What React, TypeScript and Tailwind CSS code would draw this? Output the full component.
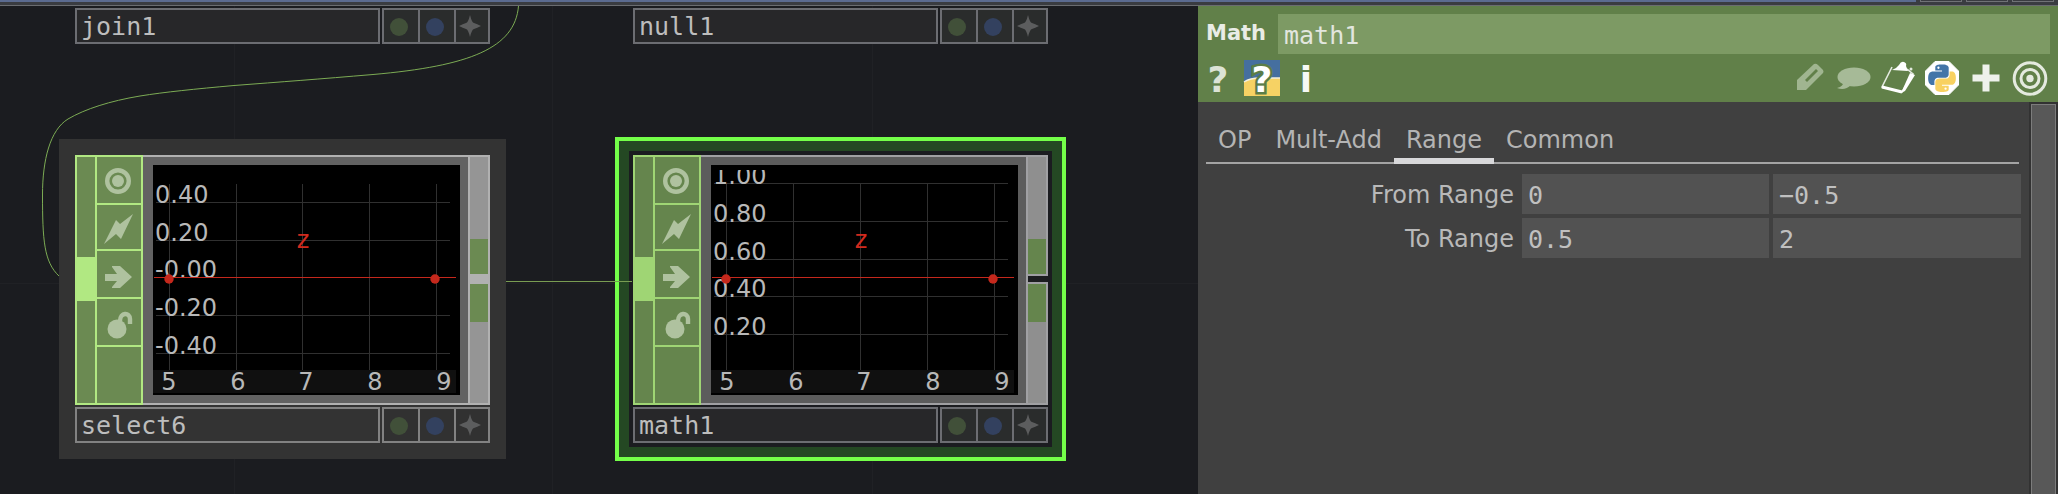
import React from "react";

type Tone = "plain" | "selected";

const PYTHON_BLUE =
  "M14.25.18l.9.2.73.26.59.3.45.32.34.34.25.34.16.33.1.3.04.26.02.2-.01.13V8.5l-.05.63-.13.55-.21.46-.26.38-.3.31-.33.25-.35.19-.35.14-.33.1-.3.07-.26.04-.21.02H8.77l-.69.05-.59.14-.5.22-.41.27-.33.32-.27.35-.2.36-.15.37-.1.35-.07.32-.04.27-.02.21v3.06H3.17l-.21-.03-.28-.07-.32-.12-.35-.18-.36-.26-.36-.36-.35-.46-.32-.59-.28-.73-.21-.88-.14-1.05-.05-1.23.06-1.22.16-1.04.24-.87.32-.71.36-.57.4-.44.42-.33.42-.24.4-.16.36-.1.32-.05.24-.01h.16l.06.01h8.16v-.83H6.18l-.01-2.75-.02-.37.05-.34.11-.31.17-.28.25-.26.31-.23.38-.2.44-.18.51-.15.58-.12.64-.1.71-.06.77-.04.84-.02 1.27.05z";
const PYTHON_YELLOW =
  "M21.04 6.11l.28.06.32.12.35.18.36.27.36.35.35.47.32.59.28.73.21.88.14 1.04.05 1.23-.06 1.23-.16 1.04-.24.86-.32.71-.36.57-.4.45-.42.33-.42.24-.4.16-.36.09-.32.05-.24.02-.16-.01h-8.22v.82h5.84l.01 2.76.02.36-.05.34-.11.31-.17.29-.25.25-.31.24-.38.2-.44.17-.51.15-.58.13-.64.09-.71.07-.77.04-.84.01-1.27-.04-1.07-.14-.9-.2-.73-.25-.59-.3-.45-.33-.34-.34-.25-.34-.16-.33-.1-.3-.04-.25-.02-.2.01-.13v-5.34l.05-.64.13-.54.21-.46.26-.38.3-.32.33-.24.35-.2.35-.14.33-.1.3-.06.26-.04.21-.02.13-.01h5.84l.69-.05.59-.14.5-.21.41-.28.33-.32.27-.35.2-.36.15-.36.1-.35.07-.32.04-.28.02-.21V6.07h2.09z";

/* ---------- Node pieces ---------- */

function NodeName({ name, tone }: { name: string; tone: Tone }) {
  const line = tone === "plain" ? "border-[#828282]" : "border-[#6c6d72]";
  const split = tone === "plain" ? "border-r-2 border-[#828282]" : "border-r-2 border-[#6c6d72]";
  const fill = tone === "plain" ? "bg-[#333333]" : "bg-[#272729]";
  const flagFill = tone === "plain" ? "bg-[#313131]" : "bg-[#2a2c2c]";
  return (
    <div className="flex h-9 gap-0.5">
      <div
        className={`flex flex-1 items-center border-2 pl-1 pt-0.5 font-['DejaVu_Sans_Mono',monospace] text-[25px] leading-8 text-[#bdbdbd] ${line} ${fill}`}
      >
        {name}
      </div>
      <div className={`flex w-[108px] border-2 ${line} ${flagFill}`}>
        <button aria-label="Display" className={`flex w-9 items-center justify-center pr-1 pt-0.5 ${split}`}>
          <span className="size-[18px] rounded-full bg-[#415039]" />
        </button>
        <button aria-label="Render" className={`flex w-9 items-center justify-center pr-1 pt-0.5 ${split}`}>
          <span className="size-[18px] rounded-full bg-[#33415f]" />
        </button>
        <button aria-label="Activate viewer" className="flex flex-1 items-center justify-center pr-1">
          <svg width="22" height="22" viewBox="-11 -11 22 22">
            <path d="M0-11Q2-3 4-3Q7-2 11 0Q7 2 4 3Q2 3 0 11Q-2 3-4 3Q-7 2-11 0Q-7-2-4-3Q-2-3 0-11Z" fill="#5c5d5e" />
          </svg>
        </button>
      </div>
    </div>
  );
}

const FLAG_ICONS = [
  {
    label: "Viewer",
    height: "h-12",
    art: (
      <g>
        <circle cx="-1" cy="1" r="10.8" fill="none" stroke="currentColor" strokeWidth="4.4" />
        <circle cx="-1" cy="1" r="6" fill="currentColor" />
      </g>
    ),
  },
  {
    label: "Cook",
    height: "h-[46px]",
    art: <path d="M-15 17L-3-7L1-3L14-13L2 12L-3 7Z" fill="currentColor" />,
  },
  {
    label: "Export",
    height: "h-12",
    art: <path d="M-14 0H-2L-7-7V-8H1L13 3L1 14H-7V13L-2 7H-14Z" fill="currentColor" />,
  },
  {
    label: "Lock",
    height: "h-12",
    art: (
      <g>
        <circle cx="-2" cy="7" r="9.5" fill="currentColor" />
        <path d="M1-1C1-10 11-10 11-3V2" fill="none" stroke="currentColor" strokeWidth="4.4" />
      </g>
    ),
  },
];

function FlagColumn({ tone }: { tone: Tone }) {
  const edge = tone === "plain" ? "border-[#b1e882]" : "border-[#9fd574]";
  const fill = tone === "plain" ? "bg-[#6b8a52]" : "bg-[#65854d]";
  const port = tone === "plain" ? "bg-[#b1e882]" : "bg-[#9fd574]";
  return (
    <div className={`flex w-[68px] border-2 text-[#afc29f] ${edge} ${fill}`}>
      <div className={`flex w-5 flex-col border-r-2 pt-[100px] ${edge}`}>
        <div className={`h-11 ${port}`} />
      </div>
      <div className="flex flex-1 flex-col">
        {FLAG_ICONS.map((flag) => (
          <button
            key={flag.label}
            aria-label={flag.label}
            className={`flex items-center justify-center border-b-2 ${edge} ${flag.height}`}
          >
            <svg width="40" height="40" viewBox="-20 -20 40 40">
              {flag.art}
            </svg>
          </button>
        ))}
      </div>
    </div>
  );
}

interface ChartProps {
  rows: { label: string; y: number }[];
  cols: number[];
  dots: number[];
}

function Chart({ rows, cols, dots }: ChartProps) {
  return (
    <svg
      className="block bg-black font-['DejaVu_Sans',sans-serif] text-[24px]"
      width="307"
      height="230"
      viewBox="0 0 307 230"
    >
      <g stroke="#303030" strokeWidth="1">
        {cols.map((x) => (
          <line key={x} x1={x} x2={x} y1="19" y2="205" />
        ))}
        {rows.map((r) => (
          <line key={r.y} x1="3" x2="297" y1={r.y - 0.5} y2={r.y - 0.5} />
        ))}
      </g>
      <rect x="0" y="205" width="303" height="23" fill="#101010" />
      <svg x="0" y="5" width="307" height="225" viewBox="0 5 307 225" fill="#b8b8b8">
        {rows.map((r) => (
          <text key={r.label} x="2" y={r.y}>
            {r.label}
          </text>
        ))}
      </svg>
      <g fill="#b8b8b8" textAnchor="middle">
        {[5, 6, 7, 8, 9].map((n, i) => (
          <text key={n} x={[16, 85, 153, 222, 291][i]} y="225">
            {n}
          </text>
        ))}
      </g>
      <line x1="1" x2="303" y1="112.5" y2="112.5" stroke="#c5281c" />
      {dots.map((x) => (
        <circle key={x} cx={x} cy="114" r="4.7" fill="#c5281c" />
      ))}
      <text x="150" y="83" textAnchor="middle" fill="#d02a1e">
        z
      </text>
    </svg>
  );
}

const SELECT_CHART: ChartProps = {
  rows: [
    { label: "0.40", y: 38 },
    { label: "0.20", y: 76 },
    { label: "-0.00", y: 113 },
    { label: "-0.20", y: 151 },
    { label: "-0.40", y: 189 },
  ],
  cols: [16.5, 83.5, 149.5, 216.5, 283.5],
  dots: [16, 282],
};

const MATH_CHART: ChartProps = {
  rows: [
    { label: "1.00", y: 19 },
    { label: "0.80", y: 57 },
    { label: "0.60", y: 95 },
    { label: "0.40", y: 132 },
    { label: "0.20", y: 170 },
  ],
  cols: [15.5, 82.5, 149.5, 216.5, 283.5],
  dots: [15, 282],
};

function NodeBody({ name, tone, chart }: { name: string; tone: Tone; chart: ChartProps }) {
  const plain = tone === "plain";
  const edge = plain ? "border-[#b1b1b1]" : "border-[#a0a0a3]";
  const middle = plain ? "bg-[#626262]" : "bg-[#5c5c5c]";
  const rail = plain ? "bg-[#959595]" : "bg-[#8f8f8f]";
  const port = plain ? "bg-[#6b8a52]" : "bg-[#65854d]";
  const gap = plain ? "bg-[#b1b1b1]" : "bg-[#1c1d20]";
  return (
    <div className="flex w-[415px] flex-col gap-0.5">
      <div className="flex h-[250px]">
        <FlagColumn tone={tone} />
        <div className={`flex-1 border-y-2 py-2 pl-2.5 ${edge} ${middle}`}>
          <Chart {...chart} />
        </div>
        <div className={`flex w-[22px] flex-col border-l-2 ${edge}`}>
          <div className={`flex h-[121px] flex-col justify-end border-2 border-l-0 ${edge} ${rail}`}>
            <div className={`h-[35px] ${port}`} />
          </div>
          <div className={`h-1.5 ${gap}`} />
          <div className={`flex flex-1 flex-col border-2 border-l-0 ${edge} ${rail}`}>
            <div className={`h-[38px] ${port}`} />
          </div>
        </div>
      </div>
      <NodeName name={name} tone={tone} />
    </div>
  );
}

/* ---------- Network canvas ---------- */

function Network() {
  return (
    <section aria-label="Network" className="relative overflow-hidden bg-[#1b1c20]">
      <svg className="absolute left-0 top-0 overflow-visible" width="1198" height="488" viewBox="0 6 1198 488" fill="none">
        <path d="M234.5 6V494M552.5 6V494M872.5 6V494M0 283.5H1198" stroke="#202125" />
        <path
          d="M518.5 6C515 48 470 66 373 74.5C320 79 280 82 234 85.5C195 89 165 92 140 96C110 101 85 109 68 119C50 130 42.5 160 42.5 195C42.5 240 44 262 59 276"
          stroke="#7cab54"
        />
      </svg>

      <div className="absolute left-[75px] top-0.5 w-[415px]">
        <NodeName name="join1" tone="selected" />
      </div>
      <div className="absolute left-[633px] top-0.5 w-[415px]">
        <NodeName name="null1" tone="selected" />
      </div>
      <div className="absolute left-[59px] top-[133px] bg-[#333333] p-4">
        <NodeBody name="select6" tone="plain" chart={SELECT_CHART} />
      </div>
      <div className="absolute left-[615px] top-[131px] border-4 border-[#74ff49] bg-[#244823] p-2.5">
        <div className="bg-[#1b1c20] p-1">
          <NodeBody name="math1" tone="selected" chart={MATH_CHART} />
        </div>
      </div>
      <div className="absolute left-[506px] top-[275px] h-px w-[126px] bg-[#799c52]" />
    </section>
  );
}

/* ---------- Parameter panel ---------- */

function ToolButton({ label, children }: { label: string; children: React.ReactNode }) {
  return (
    <button aria-label={label} className="size-9">
      <svg className="block overflow-visible" width="36" height="36" viewBox="0 0 36 36">
        {children}
      </svg>
    </button>
  );
}

const GLYPH = "font-['DejaVu_Sans',sans-serif] text-[36px] font-bold";

function Toolbar() {
  return (
    <div className="flex justify-between py-1.5 pl-0.5 pr-2.5">
      <div className="flex gap-2">
        <ToolButton label="Help">
          <text x="18" y="32" textAnchor="middle" fill="#dbe3d5" className={GLYPH}>
            ?
          </text>
        </ToolButton>
        <ToolButton label="Python help">
          <rect width="36" height="36" fill="#456f9f" />
          <path d="M0 22Q6 18 16 18H36V36H0Z" fill="#f6d264" />
          <path d="M0 22Q6 18 16 18H36" fill="none" stroke="#f3f1dc" strokeWidth="1.5" />
          <text
            x="18"
            y="32"
            textAnchor="middle"
            fill="#ffffff"
            stroke="#5b7d48"
            strokeWidth="5"
            paintOrder="stroke"
            className={GLYPH}
          >
            ?
          </text>
        </ToolButton>
        <ToolButton label="Info">
          <text x="18" y="32" textAnchor="middle" fill="#f7f9f5" className={GLYPH}>
            i
          </text>
        </ToolButton>
      </div>
      <div className="flex gap-2">
        <ToolButton label="Edit">
          <path d="M5 20L22 4Q24 3 26 5L31 10Q32 12 31 13L14 30H5Z" fill="#a0b590" />
          <path d="M13 20L24 9L26 11L15 22Z" fill="#618049" />
        </ToolButton>
        <ToolButton label="Comment">
          <ellipse cx="18" cy="17" rx="16.5" ry="9.5" fill="#a6ba97" />
          <path d="M7 22Q8 26 1 28Q9 31 15 25Z" fill="#a6ba97" />
        </ToolButton>
        <ToolButton label="Copy parameters">
          <path d="M12 7L2 27L22 32L33 14L27 9" fill="none" stroke="#e3e9de" strokeWidth="1.6" />
          <path d="M2 27L22 32" stroke="#ffffff" strokeWidth="3" />
          <path d="M21 33L25 31L35 15L30 13Z" fill="#ffffff" />
          <path d="M12 10Q17 8 19 5Q21 1 24 2Q27 3 26 6L28 11Z" fill="#ffffff" />
          <circle cx="31" cy="9" r="1.5" fill="#e3e9de" />
        </ToolButton>
        <ToolButton label="Python">
          <path d="M11 1.5H25L34.5 11V25L25 34.5H11L1.5 25V11Z" fill="#ffffff" stroke="#ffffff" strokeWidth="1" strokeLinejoin="round" />
          <g transform="translate(4.2 4.4) scale(1.15)">
            <path d={PYTHON_BLUE} fill="#4375a8" />
            <path d={PYTHON_YELLOW} fill="#f8d160" />
            <circle cx="8.9" cy="2.9" r="1" fill="#ffffff" />
            <circle cx="15.1" cy="21.1" r="1" fill="#ffffff" />
          </g>
        </ToolButton>
        <ToolButton label="Add">
          <path d="M18 4.5V31.5M4.5 18H31.5" stroke="#eef1eb" strokeWidth="7" />
        </ToolButton>
        <ToolButton label="Target">
          <g fill="none" stroke="#e4eadf">
            <circle cx="18" cy="18.5" r="15.8" strokeWidth="3" />
            <circle cx="18" cy="18.5" r="9" strokeWidth="3" />
          </g>
          <circle cx="18" cy="18.5" r="3.7" fill="#e4eadf" />
        </ToolButton>
      </div>
    </div>
  );
}

const TABS = ["OP", "Mult-Add", "Range", "Common"];

const PARAMS = [
  { id: "from", label: "From Range", values: ["0", "−0.5"] },
  { id: "to", label: "To Range", values: ["0.5", "2"] },
];

function Parameters() {
  return (
    <section aria-label="Parameters" className="flex flex-col bg-[#404040] font-['DejaVu_Sans',sans-serif]">
      <header className="bg-[#618049] pt-2">
        <div className="flex items-center pl-2 pr-2">
          <label htmlFor="op-name" className="w-[72px] text-[21px] font-bold text-[#e9ece6]">
            Math
          </label>
          <input
            id="op-name"
            defaultValue="math1"
            className="h-10 min-w-0 flex-1 bg-[#7d9a64] px-1.5 pt-0.5 font-['DejaVu_Sans_Mono',monospace] text-[25px] text-[#e2e6df] outline-none"
          />
        </div>
        <Toolbar />
      </header>

      <div className="flex flex-1">
        <div className="flex-1 px-2 pt-5">
          <div role="tablist" className="mr-0.5 flex h-[42px] border-b-2 border-[#a4a4a4]">
            {TABS.map((tab) => (
              <button
                key={tab}
                role="tab"
                aria-selected={tab === "Range"}
                className={
                  tab === "Range"
                    ? "-mb-0.5 border-b-6 border-[#d8d8da] px-3 text-2xl leading-9 text-[#b4b4b4]"
                    : "mb-1 px-3 text-2xl leading-9 text-[#b4b4b4]"
                }
              >
                {tab}
              </button>
            ))}
          </div>
          <div className="mt-2.5 flex flex-col gap-1">
            {PARAMS.map((param) => (
              <div key={param.id} className="grid grid-cols-[312fr_247fr_248fr] items-center gap-1">
                <label htmlFor={param.id} className="pr-1 pt-0.5 text-right text-2xl text-[#b9b9b9]">
                  {param.label}
                </label>
                {param.values.map((value, i) => (
                  <input
                    key={i}
                    id={i === 0 ? param.id : undefined}
                    aria-label={i === 0 ? undefined : `${param.label} 2`}
                    defaultValue={value}
                    className="h-10 w-full min-w-0 bg-[#525252] px-1.5 pt-0.5 font-['DejaVu_Sans_Mono',monospace] text-[25px] text-[#c0c0c0] outline-none"
                  />
                ))}
              </div>
            ))}
          </div>
        </div>
        <div className="flex w-[29px] bg-[#323232] px-0.5 pt-0.5">
          <div className="flex-1 border border-b-0 border-[#7c7c7c] bg-[#585858]" />
        </div>
      </div>
    </section>
  );
}

export default function App() {
  return (
    <div className="flex min-h-screen flex-col bg-[#1b1c20]">
      <div className="flex h-1.5 items-start border-b border-[#6a6c70] bg-[#3a3c41]">
        <div className="h-0.5 flex-1 bg-[#5b6b90]" />
        <div className="flex gap-1 px-1">
          <div className="h-0.5 w-[42px] border border-t-0 border-[#707276]" />
          <div className="h-0.5 w-[42px] border border-t-0 border-[#707276]" />
          <div className="h-0.5 w-[42px] border border-t-0 border-[#707276]" />
        </div>
      </div>
      <main className="grid flex-1 grid-cols-[1198fr_860fr]">
        <Network />
        <Parameters />
      </main>
    </div>
  );
}
